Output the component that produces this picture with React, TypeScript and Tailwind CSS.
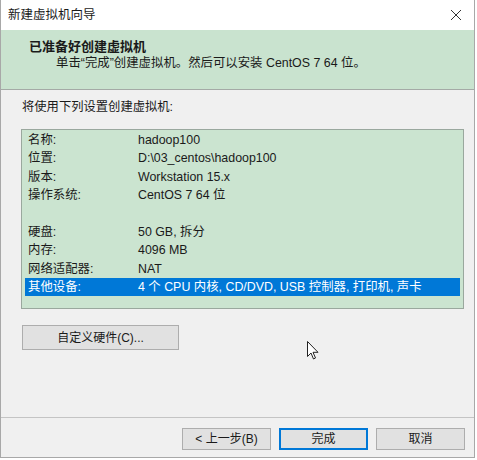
import React from "react";

const rows: [string, string][] = [
  ["名称:", "hadoop100"],
  ["位置:", "D:\\03_centos\\hadoop100"],
  ["版本:", "Workstation 15.x"],
  ["操作系统:", "CentOS 7 64 位"],
  ["", ""],
  ["硬盘:", "50 GB, 拆分"],
  ["内存:", "4096 MB"],
  ["网络适配器:", "NAT"],
];

const font = { fontFamily: '"Liberation Sans", "Noto Sans CJK SC", sans-serif' };

export default function App() {
  return (
    <div className="relative w-[477px] h-[460px] bg-white text-[#1a1a1a]" style={font}>
      <div className="flex flex-col w-[475px] h-[458px] border-x border-b border-[#a8a8a8]">
        {/* title bar */}
        <div className="flex items-center justify-between h-[30px] pl-[7px] pr-[12px] bg-white">
          <span className="text-[12.5px] leading-none">新建虚拟机向导</span>
          <svg width="12" height="12" viewBox="0 0 12 12" className="text-[#333]">
            <path d="M1 1 L11 11 M11 1 L1 11" stroke="currentColor" strokeWidth="1" />
          </svg>
        </div>

        {/* header */}
        <div className="h-[60px] bg-[#c9e3cf] border-b border-[#a4aaa6] pl-[28px] pt-[8px]">
          <div className="text-[13px] font-bold leading-[17px]">已准备好创建虚拟机</div>
          <div className="text-[12.4px] leading-[17px] pl-[27px]">
            单击“完成”创建虚拟机。然后可以安装 CentOS 7 64 位。
          </div>
        </div>

        {/* body */}
        <div className="flex-1 flex flex-col bg-[#f0f0f0]">
          <div className="flex-1 px-[20px] pt-[9px]">
            <div className="text-[12.3px] leading-[16px] pl-[1px]">将使用下列设置创建虚拟机:</div>
            <div className="mt-[14px] h-[180px] w-[443px] border border-[#9aa89e] bg-[#cbe4d0] px-[3px] pt-[1px] text-[12.4px]">
              {rows.map(([k, v], i) => (
                <div key={i} className="flex h-[18.4px] items-center pl-[3px]">
                  <span className="w-[110px]">{k}</span>
                  <span>{v}</span>
                </div>
              ))}
              <div className="flex h-[18px] items-center pl-[3px] bg-[#0078d7] text-white">
                <span className="w-[110px]">其他设备:</span>
                <span>4 个 CPU 内核, CD/DVD, USB 控制器, 打印机, 声卡</span>
              </div>
            </div>
            <button className="mt-[16px] ml-[1px] h-[25px] w-[157px] border border-[#adadad] bg-[#e1e1e1] text-[12px]">
              自定义硬件(C)...
            </button>
          </div>

          {/* footer */}
          <div className="h-[40px] border-t border-[#c4c4c4] flex justify-end gap-[8px] pr-[9px] pt-[10px]">
            <button className="h-[22px] w-[89px] border border-[#adadad] bg-[#e1e1e1] text-[12px] leading-none">
              &lt; 上一步(B)
            </button>
            <button className="h-[22px] w-[89px] border-2 border-[#0078d7] bg-[#e1e1e1] text-[12px] leading-none">
              完成
            </button>
            <button className="h-[22px] w-[89px] border border-[#adadad] bg-[#e1e1e1] text-[12px] leading-none">
              取消
            </button>
          </div>
        </div>
      </div>

      {/* mouse pointer */}
      <svg className="absolute left-[307px] top-[341px]" width="13" height="20" viewBox="0 0 13 20">
        <path d="M0.5 0.5 L0.5 15.5 L4 12 L6.5 18 L8.5 17 L6 11.3 L11 11.3 Z" fill="white" stroke="#222" strokeWidth="1" strokeLinejoin="round" />
      </svg>
    </div>
  );
}
